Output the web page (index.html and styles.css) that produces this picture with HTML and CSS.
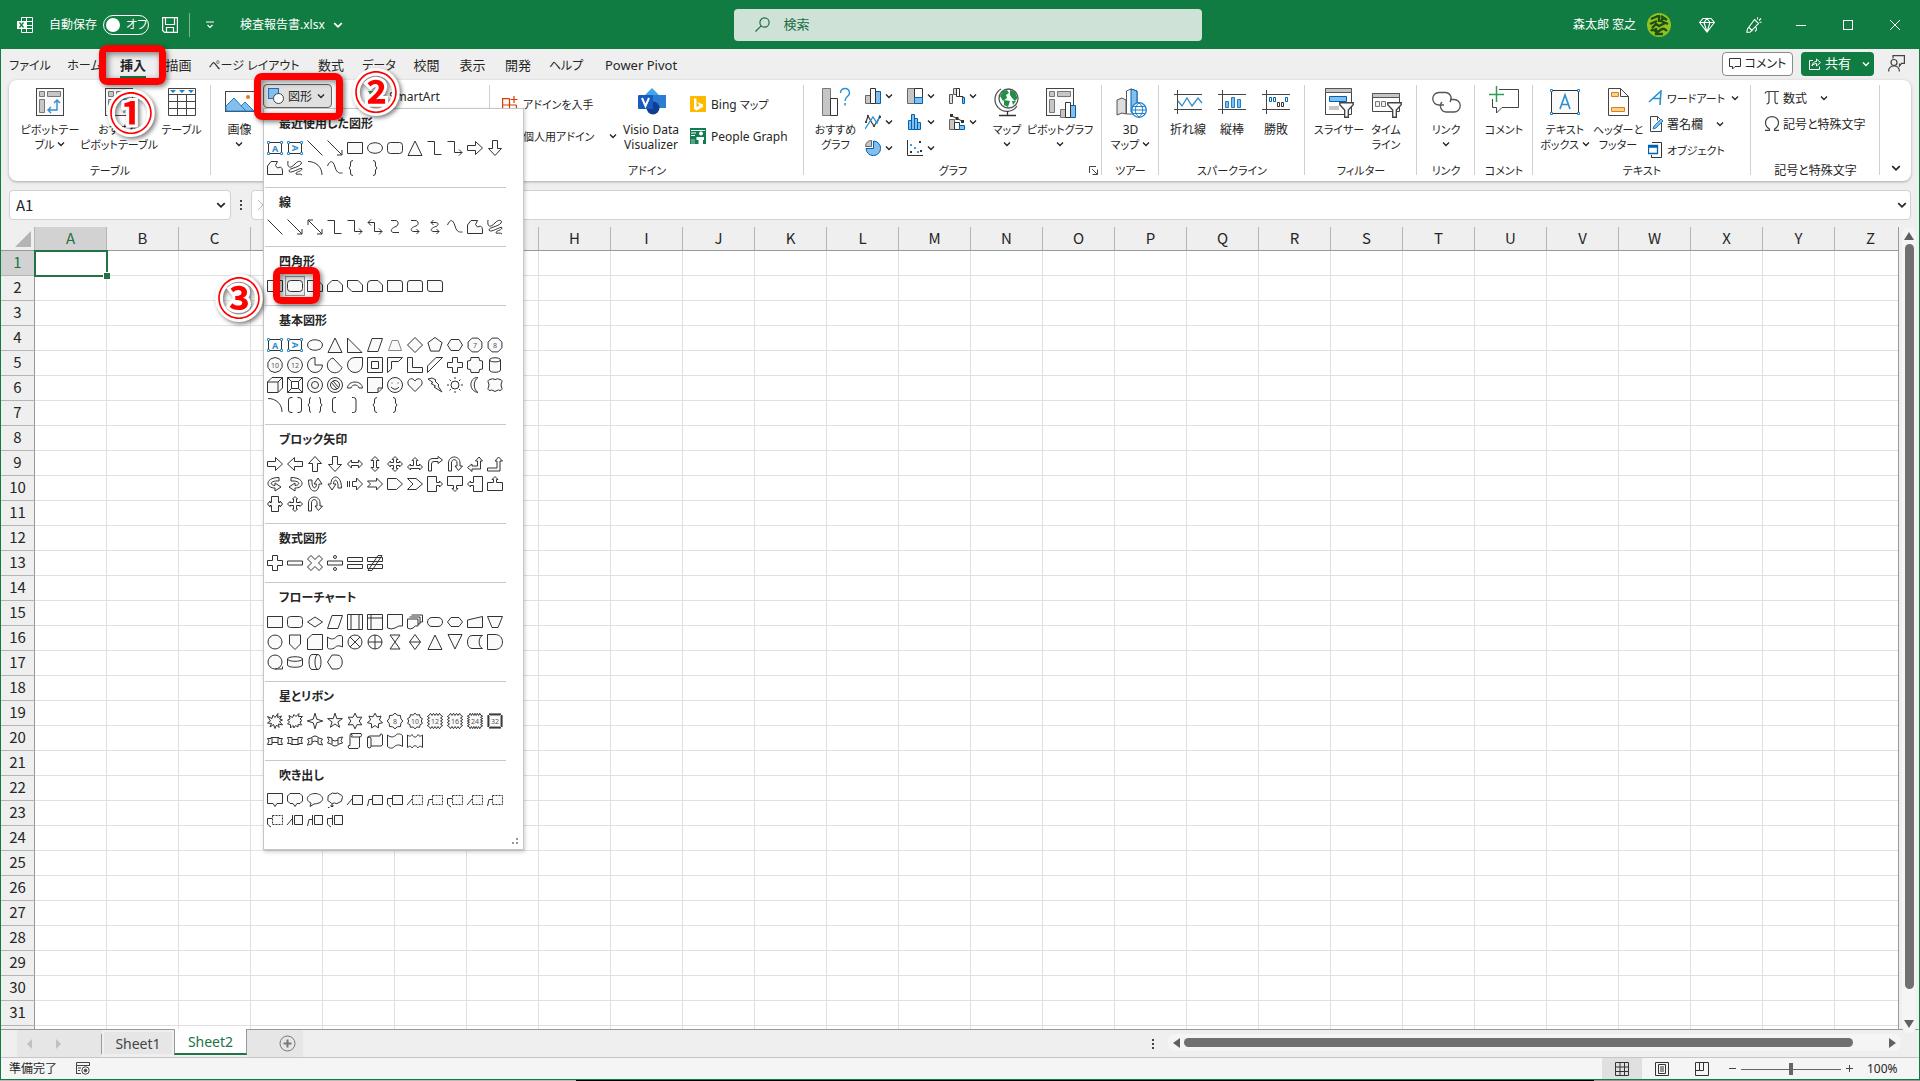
FILE: index.html
```html
<!DOCTYPE html>
<html lang="ja">
<head>
<meta charset="utf-8">
<meta name="viewport" content="width=device-width, initial-scale=1">
<title>検査報告書.xlsx - Excel</title>
<link rel="stylesheet" href="styles.css">
</head>
<body>
<svg class="sprite" aria-hidden="true">
  <symbol id="chev" viewBox="0 0 8 8"><path d="M1 2.5L4 5.5L7 2.5" fill="none" stroke="currentColor" stroke-width="1.4"/></symbol>
  <symbol id="funnel" viewBox="0 0 14 15"><path d="M.7.7H13.3V2.5L8.7 7.5V14.3H5.3V7.5L.7 2.5Z" fill="#fff" stroke="#444" stroke-width="1.3"/></symbol>
</svg>
<div class="app">
  <header class="titlebar">
    <div class="title-left">
      <svg class="i16" viewBox="0 0 16 16" fill="none" stroke="#fff"><path d="M4.5 4V.5H15.5V15.5H4.5V12M9.5.5V15.5M4.5 4.5H15.5M9 8.5H15.5M4.5 11.5H15.5"/><rect x="0" y="4" width="9" height="8" fill="#fff" stroke="none"/><path d="M2.5 5.5L6.5 10.5M6.5 5.5L2.5 10.5" stroke="#107c41" stroke-width="1.3"/></svg>
      <label class="autosave">自動保存 <input type="checkbox" class="sr"><span class="toggle"><i></i>オフ</span></label>
      <button class="tb-btn" aria-label="上書き保存"><svg class="i16" viewBox="0 0 16 16" fill="none" stroke="#fff" stroke-width="1.2"><path d="M.6.6H15.4V15.4H2.5L.6 13.5ZM3.5.6V7.5H12.5V.6M4.5 15.4V10.5H11.5V15.4"/></svg></button>
      <span class="tb-sep"></span>
      <button class="tb-btn qat" aria-label="クイック アクセス ツール バー"><svg width="8" height="8" viewBox="0 0 8 8" fill="none" stroke="#fff" stroke-width="1.2"><path d="M0 1H8M1.5 4L4 6.5L6.5 4"/></svg></button>
      <button class="tb-btn fname">検査報告書.xlsx <svg class="c10"><use href="#chev"/></svg></button>
    </div>
    <label class="search"><svg width="15" height="15" viewBox="0 0 15 15" fill="none" stroke="#1c6f43" stroke-width="1.2"><circle cx="9.5" cy="5.5" r="4.6"/><path d="M6.2 8.8L.5 14.5"/></svg><input type="text" placeholder="検索" aria-label="検索"></label>
    <div class="title-right">
      <span class="user">森太郎 窓之</span>
      <svg class="avatar" viewBox="0 0 24 24"><circle cx="12" cy="12" r="12" fill="#8fc31f"/><path d="M4 6L11 3M14 3L20 7M3 11L10 8M14 8L21 11M12 2V9M5 15L9 11L12 13L18 10M4 18C7 14 8 21 12 18S17 15 20 18M9 15V21H16M16 4L14 9" fill="none" stroke="#1f4d16" stroke-width="2.400"/></svg>
      <button class="cap" aria-label="Premium"><svg class="i16" viewBox="0 0 16 16" fill="none" stroke="#fff" stroke-width="1.1"><path d="M4 1.5H12L15.4 5.5L8 15L.6 5.5ZM.6 5.5H15.4M5 5.5L8 15L11 5.5L8 1.5Z"/></svg></button>
      <button class="cap" aria-label="リボン デザイン"><svg class="i16" viewBox="0 0 16 16" fill="none" stroke="#fff" stroke-width="1.1"><path d="M8.5 2.5L12.5 6.5L4 15.3L.8 15.2L1.5 12ZM3 10.5L6.5 14M9 14.5C11 13 11 10 9 10.5M11.5 2.5V.3M13 3.5L15 1.5M13.5 5.3H15.6"/></svg></button>
      <button class="cap" aria-label="最小化"><svg width="12" height="12" viewBox="0 0 12 12" stroke="#fff"><path d="M1 6.5H11"/></svg></button>
      <button class="cap" aria-label="最大化"><svg width="12" height="12" viewBox="0 0 12 12" stroke="#fff" fill="none"><rect x="1.5" y="1.5" width="9" height="9"/></svg></button>
      <button class="cap" aria-label="閉じる"><svg width="12" height="12" viewBox="0 0 12 12" stroke="#fff" fill="none"><path d="M1 1L11 11M11 1L1 11"/></svg></button>
    </div>
  </header>

  <nav class="tabs">
    <div class="tab-list">
      <button class="kana">ファイル</button><button class="kana">ホーム</button><button class="active"><span>挿入</span><span class="mark mark-tab"></span><span class="num num-1">①</span></button><button>描画</button><button class="kana">ページ レイアウト</button><button>数式</button><button class="kana">データ</button><button>校閲</button><button>表示</button><button>開発</button><button class="kana">ヘルプ</button><button>Power Pivot</button>
    </div>
    <div class="tab-actions">
      <button class="comment"><svg width="12" height="12" viewBox="0 0 12 12" fill="none" stroke="#333"><path d="M.5.5H11.5V8.5H6L3.5 11V8.5H.5Z"/></svg>コメント</button>
      <button class="share"><svg width="12" height="12" viewBox="0 0 12 12" fill="none" stroke="#fff"><path d="M4 2.5H.5V11.5H10.5V8.5M3 8C3.500 5 5 3.500 7.500 3.500V1L11.500 4.500L7.500 8V5.500C5.500 5.500 4 6.500 3 8Z"/></svg>共有<svg class="c8"><use href="#chev"/></svg></button>
      <button class="person" aria-label="フィードバック"><svg width="17" height="17" viewBox="0 0 17 17" fill="none" stroke="#444" stroke-width="1.200"><path d="M5 3.500V.6H16.400V8.400H13.500L11.500 11V8.400"/><circle cx="6" cy="7.500" r="3"/><path d="M.6 16.500C.6 9 11.400 9 11.400 16.500"/></svg></button>
    </div>
  </nav>

  <section class="ribbon">
    <div class="group g-table">
      <div class="tools">
        <button class="big w60 kana"><svg viewBox="0 0 32 32"><rect x="2.500" y="2.500" width="27" height="27" fill="#fafafa" stroke="#444"/><path d="M5.500 5.500H10.500V10.500H5.500ZM13.500 5.500H26.500V10.500H13.500ZM5.500 13.500H10.500V26.500H5.500Z" fill="#c8c6c4" stroke="#777"/><path d="M23 14V24H14M20 17L23 14L26 17M17 21L14 24L17 27" fill="none" stroke="#2b8fd0" stroke-width="1.400"/></svg><span>ピボットテー<br>ブル <svg class="c8"><use href="#chev"/></svg></span></button>
        <button class="big w78 kana"><svg viewBox="0 0 32 32"><rect x="2.500" y="2.500" width="27" height="27" fill="#fafafa" stroke="#444"/><path d="M5.500 5.500H10.500V10.500H5.500ZM13.500 5.500H26.500V10.500H13.500ZM5.500 13.500H10.500V26.500H5.500Z" fill="#c8c6c4" stroke="#777"/><path d="M18 16C18 12 25 12 25 16C25 19 21 19 21 23M21 25V27" fill="none" stroke="#2b8fd0" stroke-width="1.400"/></svg><span>おすすめ<br>ピボットテーブル</span></button>
        <button class="big w46 kana"><svg viewBox="0 0 32 32"><path d="M2.500 2.500H29.500V29.500H2.500ZM2.500 8.500H29.500M2.500 15.500H29.500M2.500 22.500H29.500M11.500 8.500V29.500M20.500 8.500V29.500" fill="#fff" stroke="#444"/><path d="M4 4H10L7 7ZM13 4H19L16 7ZM22 4H28L25 7Z" fill="#1e7fcb"/></svg><span>テーブル</span></button>
      </div>
      <h2 class="kana">テーブル</h2>
    </div>
    <div class="group g-illust">
      <div class="tools">
        <button class="big w46"><svg viewBox="0 0 32 32"><rect x="1.500" y="5.500" width="29" height="20" fill="#fff" stroke="#444"/><path d="M2 20L10 12L22 25H2Z" fill="#83beec" stroke="#1e7fcb"/><path d="M17 20L21 16L30 25H22Z" fill="#83beec" stroke="#1e7fcb"/><circle cx="24" cy="11" r="2" fill="#e07b1a"/></svg><span>画像<br><svg class="c8"><use href="#chev"/></svg></span></button>
        <div class="shapes">
          <button class="shapes-btn"><svg class="i16" viewBox="0 0 16 16"><rect x=".5" y=".5" width="10" height="10" fill="#83beec" stroke="#1e6fb8"/><circle cx="10.500" cy="10.500" r="5" fill="#fff" stroke="#444"/></svg>図形<svg class="c8"><use href="#chev"/></svg></button>
          <div class="menu" id="menu"></div>
          <span class="mark mark-shapes"></span><span class="num num-2">②</span>
        </div>
        <button class="small smartart"><svg class="i16" viewBox="0 0 16 16"><path d="M0 3H9L14 8L9 13H0L3 8Z" fill="#2f9b57"/><rect x="6" y="7" width="9" height="8" fill="#fff" stroke="#444"/></svg>SmartArt</button>
      </div>
    </div>
    <div class="group g-addin">
      <div class="tools">
        <div class="stack two">
          <button class="small kana"><svg class="i16" viewBox="0 0 16 16" fill="none" stroke="#d83b01" stroke-width="1.200"><path d="M7.500 2.600H.6V15.400H14.400V9M.6 9H14.400M7.500 2.600V15.400M12 0V7M8.500 3.500H15.500"/></svg>アドインを入手</button>
          <button class="small kana"><svg class="i16" viewBox="0 0 16 16" fill="none" stroke="#d83b01"><path d="M1 5L8 1L15 5V12L8 15L1 12ZM1 5L8 9L15 5M8 9V15"/></svg>個人用アドイン<svg class="c8 far"><use href="#chev"/></svg></button>
        </div>
        <button class="big w78"><svg viewBox="0 0 32 32"><path d="M17 2L24 9L17 16L10 9Z" fill="#41a5ee"/><rect x="17" y="9" width="14" height="13" fill="#2b7cd3"/><circle cx="18" cy="22" r="6.500" fill="#103f91"/><rect x="3" y="9" width="15" height="14" rx="1" fill="#185abd"/><path d="M7 12L10.500 20L14 12" fill="none" stroke="#fff" stroke-width="2"/></svg><span>Visio Data<br>Visualizer</span></button>
        <div class="stack two">
          <button class="small"><svg class="i16" viewBox="0 0 16 16"><rect width="16" height="16" fill="#ffb900"/><path d="M4 2L6.500 3V11L13 8V11L6.500 14.500L4 13ZM7 6L13 8.500L9.500 9.500Z" fill="#fff"/></svg><span>Bing <span class="kana">マップ</span></span></button>
          <button class="small"><svg class="i16" viewBox="0 0 16 16"><rect width="16" height="16" fill="#107c50"/><path d="M1 2.500H15M1 5H6M1 7.500H5" stroke="#fff"/><circle cx="11" cy="5.500" r="2" fill="#fff"/><path d="M6.500 9H14V12H13V16H8.500V12H6.500Z" fill="#fff"/><path d="M1 11H5V16H1Z" fill="#fff" opacity=".3"/></svg>People Graph</button>
        </div>
      </div>
      <h2 class="kana">アドイン</h2>
    </div>
    <div class="group g-chart">
      <div class="tools">
        <button class="big w46"><svg viewBox="0 0 32 32"><path d="M2.500 2.500H10.500V29.500H2.500Z" fill="#c8c6c4" stroke="#777"/><path d="M10.500 12.500H17.500V29.500H10.500Z" fill="#fff" stroke="#333"/><path d="M20.500 7C20.500 1 29.500 1 29.500 7C29.500 11 25 10 25 15M25 17V19.500" fill="none" stroke="#2b8fd0" stroke-width="1.500"/></svg><span class="kana">おすすめ<br>グラフ</span></button>
        <div class="chart-grid">
          <button aria-label="棒グラフ"><svg class="i16" viewBox="0 0 16 16"><path d="M.5 7.500H5.500V15.500H.5Z" fill="#c8c6c4" stroke="#666"/><path d="M10.500 3.500H15.500V15.500H10.500Z" fill="#83beec" stroke="#0063b1"/><path d="M5.500.5H10.500V15.500H5.500Z" fill="#fff" stroke="#333"/></svg><svg class="c8"><use href="#chev"/></svg></button>
          <button aria-label="階層構造グラフ"><svg class="i16" viewBox="0 0 16 16"><path d="M.5.5H7.500V15.500H.5Z" fill="#c8c6c4" stroke="#666"/><path d="M7.500.5H15.500V9.500H7.500Z" fill="#fff" stroke="#333"/><path d="M7.500 9.500H15.500V15.500H7.500Z" fill="#83beec" stroke="#0063b1"/></svg><svg class="c8"><use href="#chev"/></svg></button>
          <button aria-label="ウォーターフォール"><svg class="i16" viewBox="0 0 16 16" fill="#fff"><path d="M.5 6.500H3.500V15.500H.5ZM4.500.5H7.500V6.500H4.500Z" fill="#ddd" stroke="#555"/><path d="M7.500.5H10.500V8.500H7.500Z" stroke="#333"/><path d="M13.500 9.500H15.500V15.500H13.500Z" fill="#83beec" stroke="#0063b1"/><path d="M10 8.500H14V10" fill="none" stroke="#333"/></svg><svg class="c8"><use href="#chev"/></svg></button>
          <button aria-label="折れ線"><svg class="i16" viewBox="0 0 16 16" fill="none" stroke-width="1.300"><path d="M1 8L3 2L7 9L9 12L15 3" stroke="#444"/><path d="M0 15L8 3L12 9L15 1" stroke="#2b8fd0"/><path d="M2 1H4V3H2ZM14 2H16V4H14ZM8 11H10V13H8ZM0 7H2V9H0Z" fill="#444"/></svg><svg class="c8"><use href="#chev"/></svg></button>
          <button aria-label="統計グラフ"><svg class="i16" viewBox="0 0 16 16"><path d="M1.500 6.500H4.500V15.500H1.500ZM4.500.5H7.500V15.500H4.500ZM7.500 4.500H10.500V15.500H7.500ZM10.500 8.500H13.500V15.500H10.500Z" fill="#83beec" stroke="#0063b1"/></svg><svg class="c8"><use href="#chev"/></svg></button>
          <button aria-label="複合グラフ"><svg class="i16" viewBox="0 0 16 16"><path d="M.5 5.500H5.500V15.500H.5Z" fill="#c8c6c4" stroke="#666"/><path d="M5.500 8.500H10.500V15.500H5.500Z" fill="#fff" stroke="#333"/><path d="M10.500 11.500H15.500V15.500H10.500Z" fill="#83beec" stroke="#0063b1"/><path d="M2 1.500L8 4.500L14 7.500" fill="none" stroke="#333"/><path d="M1 0H4V3H1ZM6.500 3H9.500V6H6.500ZM12 6H15V9H12Z" fill="#333"/></svg><svg class="c8"><use href="#chev"/></svg></button>
          <button aria-label="円グラフ"><svg class="i16" viewBox="0 0 16 16"><path d="M8.500 1A7.300 7.300 0 1 1 1 8.500H8.500Z" fill="#83beec" stroke="#0063b1"/><path d="M6.500.5V6.500H.5C.5 3 3 .5 6.500.5Z" fill="#c8c6c4" stroke="#666"/></svg><svg class="c8"><use href="#chev"/></svg></button>
          <button aria-label="散布図"><svg class="i16" viewBox="0 0 16 16"><path d="M.5 0V15.500H16" fill="none" stroke="#333"/><path d="M3 11H5V13H3ZM12 1H14V3H12ZM13 10H15V12H13Z" fill="#333"/><path d="M3 4H5V6H3ZM7 7H9V9H7ZM10 11H12V13H10Z" fill="#3f9be0"/></svg><svg class="c8"><use href="#chev"/></svg></button>
        </div>
        <button class="big w40 kana"><svg viewBox="0 0 32 32"><path d="M10 3A12 12 0 1 0 26 20" fill="none" stroke="#555" stroke-width="1.300"/><circle cx="17.500" cy="12.500" r="9.500" fill="#fff" stroke="#555" stroke-width="1.300"/><path d="M9 10L12 5L16 4L18 7L15 9L16 12L12 15ZM19 4L24 6L26.500 12L24 15L21 12L19 9ZM13 14L19 15L17 21L13 19ZM21 15H25L22 19Z" fill="#1f9144"/><path d="M16.500 25V29M8 29.500H25" stroke="#333" stroke-width="1.300"/></svg><span>マップ<br><svg class="c8"><use href="#chev"/></svg></span></button>
        <button class="big w66 kana"><svg viewBox="0 0 32 32"><rect x="2.500" y="2.500" width="27" height="27" fill="#fafafa" stroke="#444"/><path d="M5.500 5.500H10.500V10.500H5.500ZM13.500 5.500H26.500V10.500H13.500ZM5.500 13.500H10.500V26.500H5.500Z" fill="#c8c6c4" stroke="#777"/><path d="M16.500 23.500H21.500V31.500H16.500Z" fill="#c8c6c4" stroke="#777"/><path d="M26.500 19.500H31.500V31.500H26.500Z" fill="#83beec" stroke="#0063b1"/><path d="M21.500 16.500H26.500V31.500H21.500Z" fill="#fff" stroke="#333"/></svg><span>ピボットグラフ<br><svg class="c8"><use href="#chev"/></svg></span></button>
      </div>
      <h2 class="kana">グラフ</h2>
      <button class="launcher" aria-label="グラフの挿入"><svg width="9" height="9" viewBox="0 0 9 9" fill="none" stroke="#444"><path d="M.5 7V.5H7M3 3L8 8M8.500 3.500V8.500H3.500"/></svg></button>
    </div>
    <div class="group g-tour">
      <div class="tools center"><button class="big w50"><svg viewBox="0 0 32 32"><path d="M2 14L7 12L11 14V28L7 27L2 29Z" fill="#ddd" stroke="#555"/><path d="M11.500 5L16 3L22 5V28H11.500Z" fill="#fff" stroke="#555"/><path d="M16 3L22 5V29L16 26Z" fill="#83beec" stroke="#0063b1"/><circle cx="24" cy="24" r="7.300" fill="#fff" stroke="#1e7fcb" stroke-width="1.300"/><path d="M17 24H31M24 17C19 21 19 27 24 31C29 27 29 21 24 17M18 20.500H30M18 27.500H30" fill="none" stroke="#1e7fcb"/></svg><span>3D<br><span class="kana">マップ</span> <svg class="c8"><use href="#chev"/></svg></span></button></div>
      <h2 class="kana">ツアー</h2>
    </div>
    <div class="group g-spark">
      <div class="tools center">
        <button class="big w44"><svg viewBox="0 0 32 32" fill="none"><path d="M5.500 4V28M2 8.500H30M2 23.500H30" stroke="#444"/><path d="M6 15L10 20L15 12L20 20L26 12L30 17" stroke="#2b8fd0" stroke-width="1.300"/></svg><span>折れ線</span></button>
        <button class="big w44"><svg viewBox="0 0 32 32" fill="none"><path d="M6.500 4V28M2 8.500H30M2 23.500H30" stroke="#444"/><path d="M9.500 15.500H12.500V21.500H9.500ZM15.500 11.500H18.500V21.500H15.500ZM21.500 13.500H24.500V21.500H21.500Z" fill="#83beec" stroke="#1e7fcb"/></svg><span>縦棒</span></button>
        <button class="big w44"><svg viewBox="0 0 32 32" fill="none"><path d="M6.500 4V28M2 8.500H30M2 23.500H30" stroke="#444"/><path d="M9.500 11.500H11.500V15.500H9.500ZM13.500 11.500H15.500V15.500H13.500ZM25.500 11.500H27.500V15.500H25.500Z" stroke="#0063b1"/><path d="M17.500 16.500H19.500V20.500H17.500ZM21.500 16.500H23.500V20.500H21.500Z" stroke="#333"/></svg><span>勝敗</span></button>
      </div>
      <h2 class="kana">スパークライン</h2>
    </div>
    <div class="group g-filter">
      <div class="tools center">
        <button class="big w50 kana"><svg viewBox="0 0 32 32"><path d="M2.500 2.500H28.500V28.500H2.500Z" fill="#fff" stroke="#444"/><path d="M2.500 2.500H28.500V6.500H2.500Z" fill="#c8c6c4" stroke="#555"/><path d="M6.500 10.500H23.500V15.500H6.500Z" fill="#83beec" stroke="#0063b1"/><path d="M6 20H16V24H6Z" fill="#c8c6c4"/><use href="#funnel" x="16" y="16" width="15" height="16"/></svg><span>スライサー</span></button>
        <button class="big w44 kana"><svg viewBox="0 0 32 32"><path d="M2.500 7.500H29.500V25.500H2.500Z" fill="#fff" stroke="#444"/><path d="M2.500 7.500H29.500V11.500H2.500Z" fill="#c8c6c4" stroke="#555"/><path d="M5.500 15.500H9.500V20.500H5.500ZM11.500 15.500H15.500V20.500H11.500Z" fill="#eee" stroke="#777"/><use href="#funnel" x="17" y="16" width="15" height="16"/></svg><span>タイム<br>ライン</span></button>
      </div>
      <h2 class="kana">フィルター</h2>
    </div>
    <div class="group g-link">
      <div class="tools center"><button class="big w50 kana"><svg viewBox="0 0 32 32" fill="none" stroke="#555" stroke-width="1.300"><path d="M14 19H9A6 6 0 0 1 9 6.500H16A6 6 0 0 1 20 16"/><path d="M20 13.500H24A6 6 0 0 1 24 26H16A6 6 0 0 1 12 16"/></svg><span>リンク<br><svg class="c8"><use href="#chev"/></svg></span></button></div>
      <h2 class="kana">リンク</h2>
    </div>
    <div class="group g-link">
      <div class="tools center"><button class="big w50 kana"><svg viewBox="0 0 32 32" fill="none"><path d="M11 3.500H30.500V21.500H14L8.500 27V21.500H4.500V13" stroke="#444"/><path d="M8.500 0V16M1 8.500H16" stroke="#2f9b57" stroke-width="1.500"/></svg><span>コメント</span></button></div>
      <h2 class="kana">コメント</h2>
    </div>
    <div class="group g-text">
      <div class="tools">
        <button class="big w56 kana"><svg viewBox="0 0 32 32"><path d="M2.500 4.500H29.500V27.500H2.500Z" fill="#fafafa" stroke="#333"/><path d="M1.500 3.500H3.500V5.500H1.500ZM28.500 3.500H30.500V5.500H28.500ZM1.500 26.500H3.500V28.500H1.500ZM28.500 26.500H30.500V28.500H28.500Z" fill="#fff" stroke="#1e7fcb"/><path d="M11 23L16 9L21 23M12.500 18.500H19.500" fill="none" stroke="#2b8fd0" stroke-width="1.600"/></svg><span>テキスト<br>ボックス <svg class="c8"><use href="#chev"/></svg></span></button>
        <button class="big w50 kana"><svg viewBox="0 0 32 32"><path d="M6.500 2.500H18.500L26.500 10.500V29.500H6.500ZM18.500 2.500V10.500H26.500" fill="#fff" stroke="#444"/><path d="M9.500 6.500H16.500V10.500H9.500ZM9.500 21.500H22.500V25.500H9.500Z" fill="#fbd28b" stroke="#e07b1a"/></svg><span>ヘッダーと<br>フッター</span></button>
        <div class="stack three">
          <button class="small kana"><svg class="i16" viewBox="0 0 16 16" fill="none" stroke="#2b8fd0" stroke-width="1.600"><path d="M1 12L13 1L12 15M5 8.500H12.500"/></svg>ワードアート<svg class="c8"><use href="#chev"/></svg></button>
          <button class="small"><svg class="i16" viewBox="0 0 16 16" fill="#fff"><path d="M2.500.5H9.500L13.500 4.500V15.500H2.500ZM9.500.5V4.500" stroke="#444"/><path d="M5 13L6 10L13 3L15 5L8 12Z" fill="#83beec" stroke="#1e7fcb"/></svg>署名欄<svg class="c8 far"><use href="#chev"/></svg></button>
          <button class="small kana"><svg class="i16" viewBox="0 0 16 16" fill="none"><path d="M4 .5H13.500V15.500H3.500V13" stroke="#333"/><path d="M.5 3.500H9.500V11.500H.5ZM.5 5H9.500" fill="#fff" stroke="#0063b1" stroke-width="1.300"/></svg>オブジェクト</button>
        </div>
      </div>
      <h2 class="kana">テキスト</h2>
    </div>
    <div class="group g-symbol">
      <div class="tools">
        <div class="stack three">
          <button class="small"><svg class="i16" viewBox="0 0 16 16" fill="none" stroke="#444" stroke-width="1.200"><path d="M1 3.500C1.500 2 2 1.500 4 1.500H15M5 1.500V11C5 13 4 14 2.500 14M11 1.500V11C11 13 12 14.500 14 13"/></svg>数式<svg class="c8 far"><use href="#chev"/></svg></button>
          <button class="small"><svg class="i16" viewBox="0 0 16 16" fill="none" stroke="#444" stroke-width="1.200"><path d="M1 14.400H5.500V13C2 11 1.500 8 1.500 6.500C1.500 3 4.500.6 8 .6S14.500 3 14.500 6.500C14.500 8 14 11 10.500 13V14.400H15"/></svg>記号と特殊文字</button>
        </div>
      </div>
      <h2>記号と特殊文字</h2>
    </div>
    <button class="collapse" aria-label="リボンを折りたたむ"><svg class="c10"><use href="#chev"/></svg></button>
  </section>

  <div class="formula-row">
    <div class="namebox"><input type="text" value="A1" aria-label="名前ボックス"><svg class="c10"><use href="#chev"/></svg></div>
    <span class="dots"><i></i><i></i><i></i></span>
    <div class="fx"><svg width="12" height="12" viewBox="0 0 12 12" stroke="#bbb"><path d="M1 1L11 11M11 1L1 11"/></svg><input type="text" aria-label="数式バー"><svg class="c10"><use href="#chev"/></svg></div>
  </div>

  <main class="sheet">
    <div class="grid-view"><table class="cells" id="cells"></table></div>
    <div class="vscroll"><i class="up"></i><b></b><i class="down"></i></div>
  </main>

  <div class="sheetbar">
    <div class="sheet-nav"><i class="prev"></i><i class="next"></i></div>
    <button class="stab">Sheet1</button><button class="stab current">Sheet2</button>
    <button class="add" aria-label="新しいシート"><svg width="17" height="17" viewBox="0 0 17 17" fill="none" stroke="#777"><circle cx="8.500" cy="8.500" r="7.500"/><path d="M8.500 4.500V12.500M4.500 8.500H12.500" stroke-width="2"/></svg></button>
    <span class="dots"><i></i><i></i><i></i></span>
    <div class="hscroll"><i class="prev"></i><b></b><i class="next"></i></div>
  </div>

  <footer class="status">
    <span>準備完了</span>
    <svg class="macro" width="14" height="13" viewBox="0 0 14 13" fill="none" stroke="#444"><path d="M.5 12V.5H13.500V4M.5 3.500H13.500M2 6H5M2 8.500H4M.5 11.500H5"/><circle cx="9.500" cy="8.500" r="3.700"/><circle cx="9.500" cy="8.500" r="1.300" fill="#444"/></svg>
    <div class="views">
      <button class="on" aria-label="標準"><svg width="14" height="14" viewBox="0 0 14 14" fill="none" stroke="#333"><path d="M.5.500H13.500V13.500H.5ZM.5 5H13.500M.5 9.500H13.500M5 .5V13.500M9.500.5V13.500"/></svg></button>
      <button aria-label="ページ レイアウト"><svg width="14" height="14" viewBox="0 0 14 14" fill="none" stroke="#333"><path d="M.5.500H13.500V13.500H.5ZM3.500 2.500H10.500V11.500H3.500ZM5 5H9M5 7H9M5 9H9"/></svg></button>
      <button aria-label="改ページ プレビュー"><svg width="14" height="14" viewBox="0 0 14 14" fill="none" stroke="#333"><path d="M.5.500H13.500V13.500H.5ZM.5 8.500H8.500V.5M4.500.5V8.500"/></svg></button>
    </div>
    <button class="z" aria-label="縮小"><svg width="9" height="9" viewBox="0 0 9 9" stroke="#444"><path d="M1 4.500H8"/></svg></button>
    <input type="range" min="0" max="100" value="50" aria-label="ズーム">
    <button class="z" aria-label="拡大"><svg width="9" height="9" viewBox="0 0 9 9" stroke="#444"><path d="M1 4.500H8M4.500 1V8"/></svg></button>
    <span class="pct">100%</span>
  </footer>
</div>
<div class="desktop"></div>
<script src="script.js"></script>
</body>
</html>
```
FILE: styles.css
```css
*{box-sizing:border-box}
body{margin:0;height:100vh;display:flex;flex-direction:column;overflow:hidden;background:#efefef;color:#262626;font:12px/15px "Noto Sans","Noto Sans CJK JP",sans-serif;font-feature-settings:"palt"}
button,input{font:inherit;font-feature-settings:inherit;color:inherit;margin:0;padding:0;border:0;background:none}
button{cursor:default;white-space:nowrap}
svg{display:block;flex:none}
h2{margin:0;font-size:12px;font-weight:400;line-height:15px;text-align:center;white-space:nowrap}
.kana{font-size:11px}
.sprite{position:absolute;width:0;height:0}
.sr{position:absolute;opacity:0}
.i16{width:16px;height:16px}
.c8{width:8px;height:8px}
.c10{width:10px;height:10px}
.app{flex:1;min-height:0;display:flex;flex-direction:column;border:solid #107c41;border-width:0 1px 1px}
.desktop{height:1px;flex:none;background:linear-gradient(90deg,#bbb 30%,#000 30% 83%,#999 83%)}

/* title bar */
.titlebar{height:49px;flex:none;margin:0 -1px;padding:0 2px 0 17px;display:grid;grid-template-columns:1fr 468px 1fr;align-items:center;background:#107c41;color:#fff}
.title-left,.title-right{display:flex;align-items:center}
.autosave{display:flex;align-items:center;gap:6px;margin-left:16px}
.toggle{display:flex;align-items:center;gap:6px;width:46px;height:20px;border:1px solid #fff;border-radius:10px;padding-left:2px}
.toggle i{width:14px;height:14px;border-radius:7px;background:#fff}
.tb-btn{display:flex;align-items:center}
.autosave+.tb-btn{margin-left:13px}
.tb-sep{width:1px;height:24px;margin-left:11px;background:#7db796}
.qat{margin-left:16px}
.fname{margin-left:26px;gap:8px}
.search{height:32px;display:flex;align-items:center;gap:14px;padding-left:21px;border-radius:4px;background:#cfe2d7;color:#1c6f43;font-size:13px}
.search input{flex:1;min-width:0}
.search input::placeholder{color:#1c6f43;opacity:1}
.title-right{justify-content:flex-end}
.avatar{width:24px;height:24px;margin:0 12px 0 11px}
.cap{width:47px;height:48px;display:flex;align-items:center;justify-content:center}

/* ribbon tabs */
.tabs{height:31px;flex:none;display:flex;justify-content:space-between;font-size:13px}
.tab-list{display:grid;grid-template-columns:58px 51px 46px 45px 106px 48px 48px 47px 45px 46px 50px 100px}
.tab-list button{padding-top:1px}
.tab-list .kana{font-size:12px}
.tab-list .active{position:relative;font-weight:700}
.active span:first-child{display:inline-block;padding-bottom:1px;border-bottom:2px solid #107c41;line-height:20px;margin-top:2px}
.tab-actions{display:flex;align-items:center;padding:0 14px 3px 0;margin-top:1px}
.tab-actions button{display:flex;align-items:center;height:24px}
.comment{width:71px;justify-content:center;gap:4px;border:1px solid #8a8a8a!important;border-radius:4px;background:#fff!important;font-size:12px}
.share{width:73px;margin:0 14px 0 8px;padding-left:8px;gap:4px;border-radius:4px;background:#107c41!important;color:#fff!important}
.share .c8{margin-left:7px}

/* ribbon */
.ribbon{height:101px;flex:none;margin:0 8px;display:flex;border-radius:8px;background:#fff;box-shadow:0 1px 3px rgba(0,0,0,.3)}
.group{position:relative;flex:none;display:flex;flex-direction:column;justify-content:space-between;padding:5px 0 3px}
.group::after{content:"";position:absolute;right:0;top:5px;bottom:6px;width:1px;background:#d0d0d0}
.tools{display:flex;align-items:flex-start}
.center{justify-content:center}
.g-table{width:202px}.g-table .tools{padding-left:11px}
.g-illust{width:279px}.g-illust .tools{padding-left:5px}
.g-addin{width:314px}.g-addin .tools{padding-left:12px}
.g-chart{width:298px}.g-chart .tools{padding-left:8px}
.g-tour{width:57px}
.g-spark{width:146px}
.g-filter{width:112px}
.g-link{width:58px}
.g-text{width:218px}.g-text .tools{padding-left:4px}
.g-symbol{width:129px}.g-symbol .tools{padding-left:13px}
.big{display:flex;flex-direction:column;align-items:center;padding-top:1px}
.big>svg{width:32px;height:32px;margin-bottom:4px}
.big span svg{display:inline-block;vertical-align:1px}
.w40{width:40px}.w44{width:44px}.w46{width:47px}.w50{width:50px}.w56{width:56px}.w60{width:60px}.w66{width:66px}.w78{width:78px}
.small{display:flex;align-items:center;gap:5px;height:26px}
.small .far{margin-left:10px}
.two{padding-top:3px}
.two .small{height:32px}
.three .small{gap:3px}
.three .small .c8{margin-left:3px}
.three .small .far{margin-left:10px}
.g-text .three{padding-left:5px}
.g-addin .two:first-child{width:110px}
.chart-grid{display:grid;grid-template-columns:repeat(3,42px);margin:-2px 0 0 6px;grid-auto-rows:26px}
.chart-grid button{display:flex;align-items:center;gap:4px}
.g-chart .w40{margin-left:-4px}
.launcher{position:absolute;right:4px;bottom:6px}
.collapse{flex:1;display:flex;align-items:flex-end;justify-content:center;padding-bottom:8px}
.smartart{margin-left:36px;margin-top:-2px}

/* shapes button and gallery */
.shapes{position:relative;width:69px}
.shapes-btn{display:flex;align-items:center;gap:4px;width:69px;height:24px;margin-top:-1px;padding-left:4px;border:1px solid #666;border-radius:4px;background:#e0e0e0}
.shapes-btn .c8{margin-left:1px}
.menu{position:absolute;z-index:5;left:0;top:23px;width:261px;padding:0 17px 19px 1px;background:#fff;border:1px solid #c6c6c6;box-shadow:1px 2px 4px rgba(0,0,0,.2)}
.menu section{padding-bottom:9px;border-bottom:1px solid #c8c8c8}
.menu section:last-of-type{border:0;padding-bottom:0}
.menu h3{margin:0;padding-left:14px;font-size:12px;line-height:29px;font-weight:700}
.shape-grid{display:grid;grid-template-columns:repeat(12,20px);grid-auto-rows:20px}
.shape-grid button{position:relative;display:flex;align-items:center;justify-content:center}
.shape-grid svg{width:16px;height:16px;fill:#fafafa;stroke:#333;stroke-width:1;overflow:visible}
.shape-grid .line{fill:none}
.shape-grid text{stroke:none;fill:#555;font:7px "Noto Sans",sans-serif;text-anchor:middle}
.shape-grid .ta{fill:#2b8fd0;font:700 9px "Noto Sans",sans-serif}
.shape-grid .hot::before{content:"";position:absolute;inset:0;border:1px solid #999;background:#eee}
.shape-grid .hot svg{position:relative}
.grip{position:absolute;right:3px;bottom:3px}

/* callout marks */
.mark{position:absolute;z-index:6;border:7px solid #f00;border-radius:8px;box-shadow:2px 2px 5px rgba(0,0,0,.5),inset 2px 2px 6px rgba(0,0,0,.5);pointer-events:none}
.mark-tab{inset:-4px -10px -5px -11px}
.mark-shapes{inset:-12px -11px -12px -9px}
.mark-cell{inset:-9px -15px -8px -12px}
.num{position:absolute;z-index:7;color:#f00;font:700 44px/44px "Noto Sans CJK JP",sans-serif;-webkit-text-stroke:6px #fff;paint-order:stroke fill;filter:drop-shadow(2px 2px 2px rgba(0,0,0,.5));pointer-events:none}
.num-1{left:-1px;top:40px}
.num-2{left:91px;top:-17px}
.num-3{left:-68px;top:-2px}

/* formula bar */
.formula-row{height:46px;flex:none;display:flex;align-items:center;padding:1px 8px 0;font-size:15px}
.namebox,.fx{display:flex;align-items:center;height:30px;border:1px solid #d2d2d2;border-radius:4px;background:#fff}
.namebox{width:222px;padding:0 4px 0 6px}
.namebox input,.fx input{flex:1;min-width:0;font-family:"Noto Sans CJK JP",sans-serif}
.fx{flex:1;padding:0 3px 0 5px}
.dots{display:flex;flex-direction:column;gap:2px;width:20px;align-items:center}
.dots i{width:2px;height:2px;background:#444}

/* worksheet */
.sheet{flex:1;min-height:0;display:flex}
.grid-view{flex:1;min-width:0;overflow:hidden;background:#fff;border-right:1px solid #999;margin-right:3px}
.cells{table-layout:fixed;width:1906px;border-collapse:separate;border-spacing:0}
.cells th{padding:0 0 2px;border:solid #b5b5b5;border-width:0 1px 1px 0;background:#efefef;font:15px/18px "Noto Sans CJK JP",sans-serif}
.cells thead th{height:24px;border-bottom-color:#999}
.cells tbody th{border-right-color:#999}
.cells td{height:25px;padding:0;border:solid #e0e0e0;border-width:0 1px 1px 0}
.cells .rowhead{width:34px}.cells .colhead{width:72px}
.cells .picked{background:#d2d2d2;color:#217346}
.corner svg{margin:2px 0 0 14px}
.cells .selected{position:relative;outline:2px solid #217346;outline-offset:-1px}
.selected::after{content:"";position:absolute;right:-4px;bottom:-4px;width:6px;height:6px;background:#217346;border:solid #fff;border-width:1px 0 0 1px}
.vscroll{width:14px;margin:0 3px -4px 0;padding:5px 0;display:flex;flex-direction:column;align-items:center;background:#f5f5f5;border-radius:7px;z-index:1}
.vscroll b{flex:1;width:9px;margin:4px 0 31px;border-radius:5px;background:#707070}
.up,.down{border:solid transparent;border-width:0 5px}
.up{border-bottom:8px solid #606060}
.down{border-top:8px solid #606060}

/* sheet tabs */
.sheetbar{height:28px;flex:none;display:flex;border-top:1px solid #999;font-size:14px}
.prev,.next{border:solid transparent;border-width:5px 0}
.prev{border-right:5px solid #c0c0c0}
.next{border-left:5px solid #c0c0c0}
.sheet-nav{width:85px;margin:0 2px 0 16px;padding-left:10px;display:flex;align-items:center;gap:24px;background:linear-gradient(#999,#999) right 4px/1px 20px no-repeat,#e6e6e6}
.stab{width:68px;height:22px;margin:2px 2px 0 0;background:#e6e6e6!important;color:#444!important}
.stab.current{width:73px;height:26px;margin:-1px 0 0;background:#fff!important;color:#217346!important;border:solid #999;border-width:0 1px 2px;border-bottom-color:#217346}
.add{width:56px;padding-left:32px!important;background:#e6e6e6!important}
.sheetbar .dots{margin-left:auto;width:30px;justify-content:center}
.hscroll{width:38.2%;height:17px;margin:4px 18px 0 0;padding:0 5px;display:flex;align-items:center;border-radius:8px;background:#f5f5f5}
.hscroll b{flex:1;height:9px;margin:0 36px 0 4px;border-radius:5px;background:#707070}
.hscroll .prev{border-right:7px solid #606060}
.hscroll .next{border-left:7px solid #606060}

/* status bar */
.status{height:22px;flex:none;display:flex;align-items:center;padding:0 19px 0 8px;border-top:1px solid #c6c6c6;background:#f5f5f5}
.macro{margin-left:19px}
.views{display:flex;margin-left:auto}
.views button{width:40px;height:21px;display:flex;align-items:center;justify-content:center}
.views .on{background:#e0e0e0}
.z{width:17px;display:flex;justify-content:center}
.views+.z{margin-left:2px}
.status input{appearance:none;width:100px;height:14px;background:linear-gradient(#666,#666) 0 7px/100% 1px no-repeat}
.status input::-webkit-slider-thumb{appearance:none;width:4px;height:12px;background:#666}
.pct{margin-left:9px;width:33px;white-space:nowrap}
```
FILE: script.js
```js
// Regular polygons and stars centred in a 16px box.
function ring(n, r1, r2, rot) {
  const pts = [];
  for (let i = 0; i < n; i++) {
    const a = (rot || 0) + i * 2 * Math.PI / n - Math.PI / 2;
    const r = i % 2 ? r2 : r1;
    pts.push((8 + r * Math.cos(a)).toFixed(1) + ' ' + (8 + r * Math.sin(a)).toFixed(1));
  }
  return 'M' + pts.join('L') + 'Z';
}
// Square seal with a row of teeth along each side.
function seal(teeth) {
  const step = 12 / teeth, top = [];
  for (let i = 0; i < teeth; i++) {
    top.push([2 + i * step, 2.5], [2 + (i + .5) * step, .3]);
  }
  const sides = [([x, y]) => [x, y], ([x, y]) => [16 - y, x], ([x, y]) => [16 - x, 16 - y], ([x, y]) => [y, 16 - x]];
  return 'M' + sides.flatMap(f => top.map(f)).map(p => p.map(v => v.toFixed(1)).join(' ')).join('L') + 'Z';
}
const poly = (n, rot) => ring(n, 7.5, 7.5, rot);
const star = (n, inner) => ring(n * 2, 7.8, inner);
const circle = r => `M${8 - r} 8a${r} ${r} 0 1 0 ${2 * r} 0a${r} ${r} 0 1 0 ${-2 * r} 0Z`;
const label = (d, t) => `<path d="${d}"/><text x="8" y="10.500">${t}</text>`;
const line = d => `<path class="line" d="${d}"/>`;
const turned = (deg, d) => `<g transform="rotate(${deg} 8 8)"><path d="${d}"/></g>`;
const flipped = d => `<g transform="matrix(-1 0 0 1 16 0)"><path d="${d}"/></g>`;

const box = 'M.5 2.500H15.500V13.500H.5Z';
const round = 'M3.500 2.500H12.500Q15.500 2.500 15.500 5.500V10.500Q15.500 13.500 12.500 13.500H3.500Q.5 13.500 .5 10.500V5.500Q.5 2.500 3.500 2.500Z';
const oval = 'M.5 8C.5 1 15.500 1 15.500 8S.5 15 .5 8Z';
const tri = 'M8 1L15 15.500H1Z';
const frame = '<path d="M3 2.500H13M3 13.500H13M1.500 4V12M14.500 4V12"/><path fill="#fff" stroke="#2b8fd0" d="M.5 1.500H2.500V3.500H.5ZM13.500 1.500H15.500V3.500H13.500ZM.5 12.500H2.500V14.500H.5ZM13.500 12.500H15.500V14.500H13.500Z"/>';
const tb = frame + '<text class="ta" x="8" y="11.500">A</text>';
const tbv = frame + '<text class="ta" x="8" y="11.500" transform="rotate(90 8 8)">A</text>';
const l1 = line('M.5 .5L15.500 15.500');
const l2 = line('M.5 .5L15 15M15 10V15H10');
const l3 = line('M1 1L15 15M15 10V15H10M1 6V1H6');
const e1 = line('M.5 1.500H7.500V14.500H14.500');
const e2 = line('M.5 1.500H7.500V12.500H15M12 9.500L15 12.500L12 15.500');
const e3 = line('M1 3.500H7.500V12.500H15M12 9.500L15 12.500L12 15.500M4 .5L1 3.500L4 6.500');
const c1 = line('M4 1.500H8C12 1.500 12 6 9 7.500C3 9.500 3 13.500 7 13.500H12');
const c2 = line('M4 1.500H8C12 1.500 12 6 9 7C3 8.500 3 12.500 7 12.500H12M9.500 10L12 12.500L9.500 15');
const c3 = line('M4 3.500H8C12 3.500 12 6 9 7.500C3 9 3 12.500 7 12.500H12M9.500 10L12 12.500L9.500 15M6.500 1L4 3.500L6.500 6');
const wave = line('M.5 6C3 0 6 0 8 7S13 13 15.500 13');
const free = 'M.5 14.500V6L4 1.500H10.500L8.500 5.500L10.500 8L13.500 7Q15.500 8 15.500 11V14.500Z';
const scrib = line('M1 1C0 8 3 9 8 4C11 0 16 1 14 4C11 8 2 8 2 11C3 15 15 6 15 9C14 12 9 11 9 14C10 15 13 13 15 15');
const arc = line('M1 1.500C9 1.500 15 7 15 15');
const lb = line('M6 .5Q3.500 .5 3.500 3V6L2 8L3.500 10V13Q3.500 15.500 6 15.500');
const rb = line('M6 .5Q8.500 .5 8.500 3V6L10 8L8.500 10V13Q8.500 15.500 6 15.500');
const right = 'M.5 5.500H8.500V1.500L15.500 8L8.500 14.500V10.500H.5Z';
const dbl = 'M.5 8L4.500 4V6.500H11.500V4L15.500 8L11.500 12V9.500H4.500V12Z';
const bent = 'M1.500 15V7Q1.500 2.500 6 2.500H11V.5L15.500 4L11 7.500V5.500H7Q4.500 5.500 4.500 8V15Z';
const uturn = 'M1.500 15V7C1.500 -1 13 -1 13 7V10H15.500L11.500 14.500L8 10H10V7C10 2.500 4.500 2.500 4.500 7V15Z';
const bentUp = 'M.5 12H10V5H8L11.500 1L15.500 5H13V15H.5Z';
const curv = 'M12 1.500C-2 1.500 -2 12 8 12V15L14 11L8 7V9.500C2 9 3 4.500 12 5Z';
const callout = 'M.5 1.500H15.500V11.500H10L8 14.500L6 11.500H.5Z';
const cloud = 'M3 2.500Q5.500 1 8 2.500Q10.500 1 13 2.500Q16 3 14.500 6Q13.500 8 14.500 10Q16 13 13 13.500Q11.500 12.500 10 13.500Q8 15.500 6 13.500Q4.500 12.500 3 13.500Q0 13 1.500 10Q2.500 8 1.500 6Q0 3 3 2.500Z';
const ribbonUp = 'M.5 5.500H4V4.500H12V5.500H15.500L14 8L15.500 11.500H11V9.500H5V11.500H.5L2 8ZM5 9.500V5M11 9.500V5';
const ribbonCurve = 'M.5 6L4 5Q8 1 12 5L15.500 6L14 8.500L15.500 12L11 11V9Q8 7 5 9V11L.5 12L2 8.500ZM5 9V5M11 9V5';
const bracketL = 'M5.500 .5H4Q1.500 .5 1.500 3V13Q1.500 15.500 4 15.500H5.500';
const bracketR = 'M10.500 .5H12Q14.500 .5 14.500 3V13Q14.500 15.500 12 15.500H10.500';
const boxed = 'M5.500 3.500H15.500V12.500H5.500Z';
const dash = d => `<path stroke-dasharray="2 1" d="${boxed}"/>` + line(d);
const solid = d => `<path d="${boxed}"/>` + line(d);
const barred = d => '<path d="M7.500 3.500H15.500V12.500H7.500Z"/>' + line('M5.500 3V13' + d);
const leg1 = 'M0 13L5 7', leg2 = 'M.5 14L2 7.500H5', leg3 = 'M5 6.500H.5V12Q2 14 4 15';
const burst1 = 'M8 4.500L11 .5L10.500 4.500L14.500 3L12.500 6L15.500 7L12.500 8.500L15.500 12L11.500 11L12 14.500L9.500 12L8 15.500L6.500 11.500L3 14L4.500 10.500L.5 10L3.500 8L.5 3.500L5 5.500L6 2Z';
const burst2 = 'M9 3.500L12 .5L11.500 3.500L15.500 3.500L13 6L15 7.500L13 9L14.500 12L11 11.500L11 14L8.500 12.500L7 15L6 12.500L3.500 15L3.500 11.500L.5 11L2.500 9L.5 7L3 6L2 2.500L5.500 4.500L7 1.500Z';

const sections = [
  ['最近使用した図形', [tb, tbv, l1, l2, box, oval, round, tri, e1, e2, right, turned(90, right), free, scrib, arc, wave, lb, rb]],
  ['線', [l1, l2, l3, e1, e2, e3, c1, c2, c3, wave, free, scrib]],
  ['四角形', [box, round, 'M.5 2.500H11L15.500 7V13.500H.5Z', 'M5 2.500H11L15.500 7V13.500H.5V7Z', 'M.5 2.500H11L15.500 7V13.500H5L.5 9Z', 'M4 2.500H11L15.500 7V13.500H.5V6Q.5 2.500 4 2.500Z', 'M.5 2.500H13Q15.500 2.500 15.500 5V13.500H.5Z', 'M3 2.500H13Q15.500 2.500 15.500 5V13.500H.5V5Q.5 2.500 3 2.500Z', 'M.5 2.500H13Q15.500 2.500 15.500 5V13.500H3Q.5 13.500 .5 11Z']],
  ['基本図形', [tb, tbv, oval, tri, 'M.5 1V15.500H15Z', 'M5 1.500H15.500L11 14.500H.5Z', '<path stroke="#888" d="M5 3.500H11L14.500 13.500H1.500Z"/>', poly(4), poly(5), 'M4 2.500H12L15.500 8L12 13.500H4L.5 8Z', label(poly(8, Math.PI / 8), 7), label(poly(8, Math.PI / 8), 8),
    label(poly(10), 10), label(poly(12), 12), 'M8 .5A7.500 7.500 0 1 0 15.500 8H8Z', 'M6 1A7.500 7.500 0 1 0 15 10.500Z', 'M15.500 .5V8A7.500 7.500 0 1 1 8 .5Z', 'M.5 .5H15.500V15.500H.5ZM4.500 4.500V11.500H11.500V4.500Z', 'M.5 .5H15.500L11.500 4.500H4.500V12L.5 15.500Z', 'M.5 .5H5.500V10.500H15.500V15.500H.5Z', 'M9 .5H15.500L.5 15.500V9Z', 'M5.500 .5H10.500V5.500H15.500V10.500H10.500V15.500H5.500V10.500H.5V5.500H5.500Z', 'M4 .5H12L12.500 3.500L15.500 4V12L12.500 12.500L12 15.500H4L3.500 12.500L.5 12V4L3.500 3.500Z', 'M2.500 3C2.500 0 13.500 0 13.500 3V13C13.500 16 2.500 16 2.500 13ZM2.500 3C2.500 5.500 13.500 5.500 13.500 3',
    'M.5 5L5 .5H15.500V11L11 15.500H.5ZM.5 5H11V15.500M11 5L15.500 .5', 'M.5 .5H15.500V15.500H.5ZM4.500 4.500V11.500H11.500V4.500ZM.5 .5L4.500 4.500M15.500 .5L11.500 4.500M.5 15.500L4.500 11.500M15.500 15.500L11.500 11.500', circle(7.5) + circle(3.5), circle(7.5) + circle(4.5) + 'M4 5L10 12M6 4L12 11', 'M.5 11C1 3 15 3 15.500 11H12C11 7 5 7 4 11Z', 'M.5 .5H15.500V11L11 15.500H.5ZM15.500 11H11V15.500', circle(7.5) + 'M5 5.500V6.500M11 5.500V6.500M4 10Q8 14.500 12 10', 'M8 14.500L1.500 8C-1 3 5 -1 8 4C11 -1 17 3 14.500 8Z', 'M5 1L9 3L8 4L12 8L11 9L15 15L7 10L8.500 9L4 6.500L6 5.500L1 2Z', circle(4) + 'M8 0V2M8 14V16M0 8H2M14 8H16M2.500 2.500L4 4M13.500 2.500L12 4M2.500 13.500L4 12M13.500 13.500L12 12', 'M11 .5C2 0 1 14 11 15.500C6 12 6 4 11 .5Z', cloud,
    arc, line(bracketL + bracketR), line('M4 .5Q2.500 .5 2.500 3V6L1 8L2.500 10V13Q2.500 15.500 4 15.500M12 .5Q13.500 .5 13.500 3V6L15 8L13.500 10V13Q13.500 15.500 12 15.500'), line('M9 .5H8Q5.500 .5 5.500 3V13Q5.500 15.500 8 15.500H9'), line('M5 .5H6.500Q9 .5 9 3V13Q9 15.500 6.500 15.500H5'), `<g transform="translate(4 0)">${lb}</g>`, rb]],
  ['ブロック矢印', [right, flipped(right), turned(-90, right), turned(90, right), dbl, turned(90, dbl), 'M8 .5L11 3.500H9.500V6.500H12.500V5L15.500 8L12.500 11V9.500H9.500V12.500H11L8 15.500L5 12.500H6.500V9.500H3.500V11L.5 8L3.500 5V6.500H6.500V3.500H5Z', 'M8 1.500L11 4.500H9.500V9.500H12.500V8L15.500 11L12.500 14V12.500H3.500V14L.5 11L3.500 8V9.500H6.500V4.500H5Z', bent, uturn, 'M12 1L15.500 5H13.500V13H5V15.500L.5 11.500L5 8V10H10.500V5H8.500Z', bentUp,
    curv, flipped(curv), turned(-90, curv), turned(90, flipped(curv).match(/d="([^"]+)"/)[1]), 'M.5 5V11M2.500 5V11M5.500 5.500H9.500V2L15.500 8L9.500 14V10.500H5.500Z', 'M.5 5H9.500V2L15.500 8L9.500 14V11H.5L3.500 8Z', 'M.5 2.500H9.500L15.500 8L9.500 13.500H.5Z', 'M.5 2.500H9L15.500 8L9 13.500H.5L6 8Z', 'M.5 .5H9.500V6.500H12.500V5L15.500 8L12.500 11V9.500H9.500V15.500H.5Z', 'M.5 .5H15.500V9.500H9.500V12.500H11L8 15.500L5 12.500H6.500V9.500H.5Z', 'M15.500 .5H6.500V6.500H3.500V5L.5 8L3.500 11V9.500H6.500V15.500H15.500Z', 'M.5 14.500H15.500V6.500H9.500V3.500H11L8 .5L5 3.500H6.500V6.500H.5Z',
    'M4.500 .5H11.500V6.500H13V5L15.500 8L13 11V9.500H11.500V15.500H4.500V9.500H3V11L.5 8L3 5V6.500H4.500Z', 'M8 .5L10.500 3H9.500V6.500H13V5.500L15.500 8L13 10.500V9.500H9.500V13H10.500L8 15.500L5.500 13H6.500V9.500H3V10.500L.5 8L3 5.500V6.500H6.500V3H5.500Z', uturn]],
  ['数式図形', ['M5.500 .5H10.500V5.500H15.500V10.500H10.500V15.500H5.500V10.500H.5V5.500H5.500Z', 'M.5 6H15.500V10H.5Z', 'M4 .5L8 4.500L12 .5L15.500 4L11.500 8L15.500 12L12 15.500L8 11.500L4 15.500L.5 12L4.500 8L.5 4Z', 'M.5 6H15.500V10H.5ZM6.500 2a1.500 1.500 0 1 0 3 0a1.500 1.500 0 1 0 -3 0M6.500 14a1.500 1.500 0 1 0 3 0a1.500 1.500 0 1 0 -3 0', 'M.5 2.500H15.500V6.500H.5ZM.5 9.500H15.500V13.500H.5Z', 'M.5 2.500H15.500V6.500H.5ZM.5 9.500H15.500V13.500H.5ZM11 .5H15L5 15.500H1Z']],
  ['フローチャート', [box, round, 'M8 3L15.500 8L8 13L.5 8Z', 'M5 1.500H15.500L11 14.500H.5Z', 'M.5 .5H15.500V15.500H.5ZM4 .5V15.500M12 .5V15.500', 'M.5 .5H15.500V15.500H.5ZM4 .5V15.500M.5 4H15.500', 'M.5 .5H15.500V12Q12 11 8 14Q4 16 .5 14Z', 'M4.500 1H15.500V8H13M2.500 3H13V10H11M.5 5H11V12Q8 11 6 14Q3 16 .5 14Z', 'M5 3.500H11C17 3.500 17 12.500 11 12.500H5C-1 12.500 -1 3.500 5 3.500Z', 'M4 3.500H12L15.500 8L12 12.500H4L.5 8Z', 'M.5 6L15.500 2.500V13.500H.5Z', 'M.5 2.500H15.500L11 13.500H5Z',
    circle(7), 'M2.500 1H13.500V10L8 15.500L2.500 10Z', 'M5 .5H15.500V15.500H.5V5Z', 'M.5 3C4 6 8 5 9 3C11 1 15.500 1 15.500 3V13C12 11 9 12 8 13.500C6 15.500 .5 15.500 .5 13.500Z', circle(7) + 'M3 3L13 13M13 3L3 13', circle(7) + 'M8 1V15M1 8H15', 'M3 1H13L3 15H13Z', 'M8 .5L13.500 8L8 15.500L2.500 8ZM2.500 8H13.500', tri, 'M1 .5H15L8 15Z', 'M5 1.500H15.500C11 3 11 13 15.500 14.500H5C-1 14.500 -1 1.500 5 1.500Z', 'M.5 .5H8C18 .5 18 15.500 8 15.500H.5Z',
    circle(7) + 'M8 15H15.500V12.500', 'M.5 5C.5 2 15.500 2 15.500 5V11C15.500 14 .5 14 .5 11ZM.5 5C.5 8 15.500 8 15.500 5', 'M5 .5H11C15 .5 15 15.500 11 15.500H5C1 15.500 1 .5 5 .5ZM11 .5C7 .5 7 15.500 11 15.500', 'M5 1H10C17 1 17 15 10 15H5L.5 8Z']],
  ['星とリボン', [burst1, burst2, star(4, 2.5), star(5, 3), star(6, 4.2), star(7, 4.5), label(star(8, 6.3), 8), label(star(10, 6.3), 10), label(seal(4), 12), label(seal(4), 16), label(seal(5), 24), label(seal(6), 32),
    ribbonUp, turned(180, ribbonUp), ribbonCurve, turned(180, ribbonCurve), 'M4 .5H14Q15.500 2.500 13.500 4H12.500V14L11 15.500H2Q.5 14 1.500 12.500H3V2ZM4 .5Q6 2 4.500 4H13', 'M.5 5Q.5 3 3 3H13V1.500Q15 0 15.500 2V12L14 13H4V14Q2 16 .5 14ZM4 13V5Q2 3 .5 5', 'M.5 2C4 5 7 4 9 2C11 0 14 1 15.500 2.500V13.500C12 11 9 12 7 14C5 16 2 15 .5 13.500Z', 'M.5 2C3 4 4 3 5 1.500C7 5 9 5 11 1.500C12 3 13 4 15.500 2V14.500C13 12.500 12 13 11 15C9 12 7 12 5 15C4 13 3 12.500 .5 14.500Z']],
  ['吹き出し', [callout, 'M3 1.500H13L15.500 4V9L13 11.500H10L8 14.500L6 11.500H3L.5 9V4Z', 'M4 11C-3 8 1 1.500 8 1.500S19 8 12 11Q9 12 7 12L3 14.500Z', 'M3 2.500Q5.500 0 8 1.500Q11 0 13 2.500Q16.500 3.500 15 7Q15 10 12 10.500Q10 12.500 7.500 11Q4 12.500 3 10Q-.500 9 1 6Q.5 3 3 2.500ZM4 13H6V14.500H4ZM1 15.500H2.500',
    solid(leg1), solid(leg2), solid(leg3), dash(leg1), dash(leg2), dash(leg3), dash(leg1), dash(leg2), dash(leg3), barred(leg1), barred(leg2), barred(leg3)]]
];

document.getElementById('menu').innerHTML = sections.map(([name, shapes]) =>
  `<section><h3>${name}</h3><div class="shape-grid">` + shapes.map((s, i) => {
    const art = s[0] === '<' ? s : `<path d="${s}"/>`;
    const hot = name === '四角形' && i === 1;
    return `<button${hot ? ' class="hot"' : ''} aria-label="${name} ${i + 1}"><svg viewBox="0 0 16 16">${art}</svg>` +
      (hot ? '<span class="mark mark-cell"></span><span class="num num-3">③</span>' : '') + '</button>';
  }).join('') + '</div></section>').join('') +
  '<svg class="grip" width="8" height="8" viewBox="0 0 8 8" fill="#999"><path d="M4 0H6V2H4ZM4 4H6V6H4ZM0 4H2V6H0Z"/></svg>';

const cols = [...'ABCDEFGHIJKLMNOPQRSTUVWXYZ'];
let html = '<thead><tr><th class="rowhead corner"><svg width="16" height="16"><path d="M16 0V16H0Z" fill="#b4b4b4"/></svg></th>' +
  cols.map((c, i) => `<th class="colhead${i ? '' : ' picked'}">${c}</th>`).join('') + '</tr></thead><tbody>';
for (let r = 1; r <= 32; r++) {
  html += `<tr><th class="${r === 1 ? 'picked' : ''}">${r < 32 ? r : ''}</th>` +
    cols.map((c, i) => r === 1 && i === 0 ? '<td class="selected"></td>' : '<td></td>').join('') + '</tr>';
}
document.getElementById('cells').innerHTML = html + '</tbody>';
```
